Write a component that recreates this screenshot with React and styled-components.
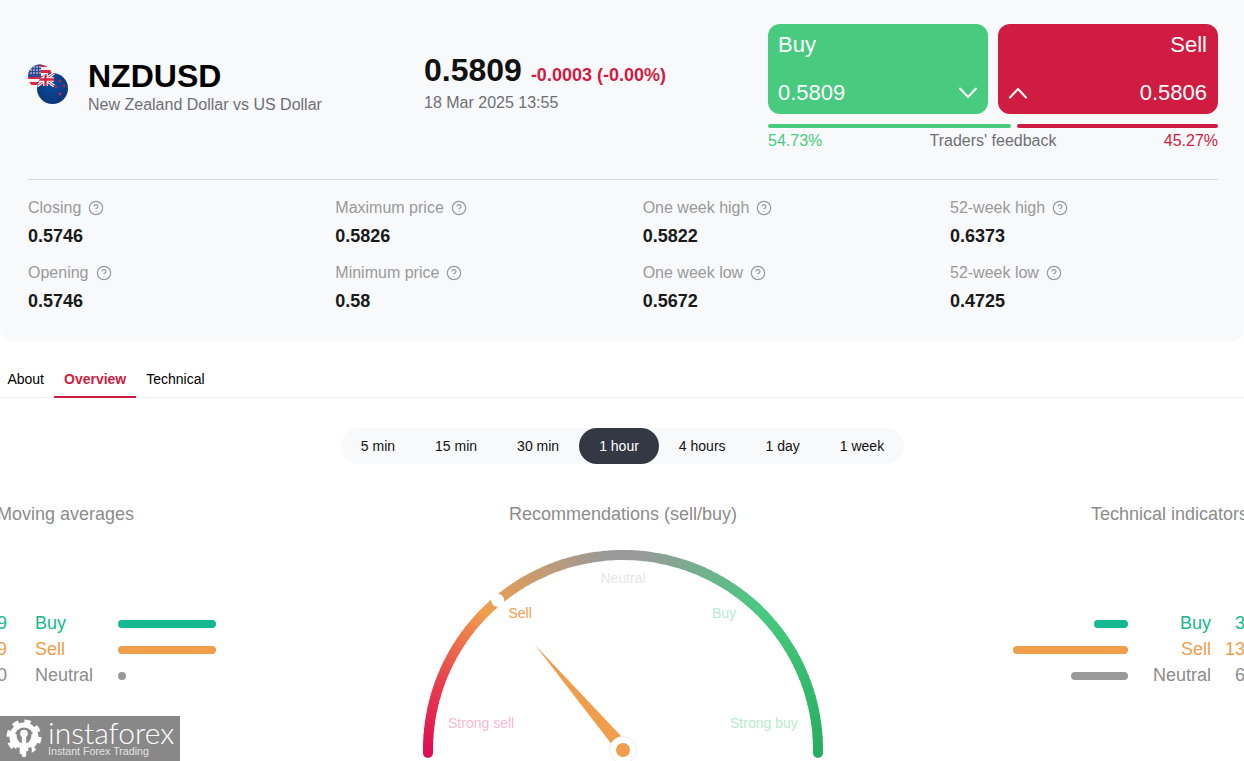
import React from "react";
import styled, { createGlobalStyle } from "styled-components";
import { CircleHelp } from "lucide-react";

const GlobalStyle = createGlobalStyle`
  html, body {
    margin: 0;
    padding: 0;
    background: #fff;
    font-family: "Liberation Sans", Arial, sans-serif;
  }
`;

const Page = styled.div`
  position: relative;
  width: 100%;
  height: 100vh;
  overflow: hidden;
`;

const Panel = styled.section`
  box-sizing: border-box;
  height: 341px;
  padding: 24px 26px 0 28px;
  background: #f8f9fb;
  border-radius: 0 0 12px 12px;
`;

const TopRow = styled.div`
  display: flex;
  height: 155px;
  border-bottom: 1px solid #d9d9d9;
`;

const Instrument = styled.div`
  width: 396px;
  display: flex;
  gap: 20px;
  padding-top: 40px;
`;

const Names = styled.div`
  margin-top: -5px;
`;

const Symbol = styled.div`
  font-size: 32px;
  line-height: 34px;
  font-weight: 700;
  color: #000;
`;

const Subtitle = styled.div`
  margin-top: 2px;
  font-size: 16px;
  line-height: 20px;
  color: #6f6f73;
`;

const Quote = styled.div`
  width: 344px;
  padding-top: 27px;
`;

const QuoteLine = styled.div`
  display: flex;
  align-items: baseline;
  gap: 9px;
  height: 38px;
`;

const Price = styled.span`
  font-size: 32px;
  line-height: 38px;
  font-weight: 700;
  color: #111;
`;

const Change = styled.span`
  font-size: 18px;
  font-weight: 700;
  color: #cf1c40;
`;

const QuoteDate = styled.div`
  margin-top: 4px;
  font-size: 16px;
  line-height: 20px;
  color: #6f6f73;
`;

const Trade = styled.div`
  width: 450px;
`;

const TradeButtons = styled.div`
  display: flex;
  gap: 10px;
`;

const TradeButton = styled.div`
  box-sizing: border-box;
  width: 220px;
  height: 90px;
  padding: 8px ${({ $sell }) => ($sell ? "11px" : "10px")} 8px 10px;
  display: flex;
  flex-direction: column;
  justify-content: space-between;
  border-radius: 12px;
  color: #fff;
  font-size: 22px;
  line-height: 26px;
  background: ${({ $sell }) => ($sell ? "#cf1c40" : "#48ca7f")};
  text-align: ${({ $sell }) => ($sell ? "right" : "left")};
`;

const TradeBottom = styled.div`
  display: flex;
  align-items: center;
  justify-content: space-between;
`;

const Feedback = styled.div`
  display: flex;
  gap: 6px;
  margin-top: 10px;
`;

const FeedbackBar = styled.div`
  height: 4px;
  border-radius: 2px;
  background: ${({ $color }) => $color};
`;

const FeedbackLabels = styled.div`
  display: flex;
  justify-content: space-between;
  margin-top: 3px;
  font-size: 16px;
  line-height: 20px;
  color: #6f6f73;
`;

const Percent = styled.span`
  color: ${({ $color }) => $color};
`;

const Stats = styled.div`
  display: grid;
  grid-template-columns: repeat(4, 307.33px);
  row-gap: 16px;
  padding-top: 18px;
`;

const StatLabel = styled.div`
  display: flex;
  align-items: center;
  gap: 7px;
  height: 20px;
  font-size: 16px;
  color: #999;
`;

const StatValue = styled.div`
  margin-top: 8px;
  font-size: 18px;
  line-height: 21px;
  font-weight: 700;
  color: #1a1a1a;
`;

const Tabs = styled.nav`
  display: flex;
  height: 56px;
  border-bottom: 1px solid #eceef2;
  align-items: flex-end;
`;

const Tab = styled.div`
  box-sizing: border-box;
  height: 35px;
  padding: 0 10px;
  margin-left: ${({ $first }) => ($first ? "-2.6px" : "0")};
  margin-bottom: -1px;
  font-size: 14px;
  line-height: 33px;
  font-weight: ${({ $active }) => ($active ? 700 : 400)};
  color: ${({ $active }) => ($active ? "#cf1c40" : "#000")};
  border-bottom: 2px solid ${({ $active }) => ($active ? "#cf1c40" : "transparent")};
`;

const PeriodWrap = styled.div`
  display: flex;
  justify-content: center;
  padding: 30px 0 0 1px;
`;

const Periods = styled.div`
  display: flex;
  height: 36px;
  border-radius: 18px;
  background: #f8f9fb;
`;

const Period = styled.div`
  padding: 0 20px;
  border-radius: 18px;
  font-size: 14px;
  line-height: 36px;
  color: ${({ $active }) => ($active ? "#fff" : "#111")};
  background: ${({ $active }) => ($active ? "#343844" : "transparent")};
`;

const Board = styled.div`
  display: flex;
  justify-content: space-between;
  margin: 40px -1px 0 -13px;
`;

const Side = styled.div`
  width: 229px;
  text-align: ${({ $right }) => ($right ? "right" : "left")};
`;

const Heading = styled.div`
  font-size: 18px;
  line-height: 20px;
  color: #8c8c8c;
  white-space: nowrap;
`;

const SideHeading = styled(Heading)`
  padding-left: ${({ $right }) => ($right ? "0" : "10px")};
  margin-right: ${({ $right }) => ($right ? "-3px" : "0")};
`;

const Legend = styled.div`
  margin-top: 86px;
`;

const LegendRow = styled.div`
  display: flex;
  align-items: center;
  height: 26px;
  font-size: 18px;
  color: ${({ $color }) => $color};
  flex-direction: ${({ $right }) => ($right ? "row-reverse" : "row")};
`;

const LegendCount = styled.span`
  width: 20px;
  flex: none;
  text-align: right;
`;

const LegendName = styled.span`
  flex: none;
  width: 83px;
  margin: ${({ $right }) => ($right ? "0 14px 0 0" : "0 0 0 28px")};
  text-align: ${({ $right }) => ($right ? "right" : "left")};
`;

const LegendBar = styled.span`
  display: block;
  flex: none;
  height: 8px;
  margin-top: 2px;
  border-radius: 4px;
  background: ${({ $color }) => $color};
`;

const BarSlot = styled.div`
  flex: 1;
  display: flex;
  justify-content: ${({ $right }) => ($right ? "flex-end" : "flex-start")};
`;

const Center = styled.div`
  width: 420px;
  margin-left: 14px;
  text-align: center;
`;

const GaugeSvg = styled.svg`
  display: block;
  margin-top: 31px;
  overflow: visible;
`;

const GaugeLabel = styled.text`
  font-family: "Liberation Sans", Arial, sans-serif;
  font-size: 14px;
`;

const Watermark = styled.div`
  position: absolute;
  left: 0;
  bottom: 0;
  width: 180px;
  height: 45px;
  display: flex;
  background: #888;
  color: #fff;
`;

const WatermarkText = styled.div`
  margin-left: 5px;
  padding-top: 3px;
`;

const WatermarkName = styled.div`
  font-family: Lato, "Open Sans", sans-serif;
  font-weight: 300;
  font-size: 30px;
  line-height: 26px;
  white-space: nowrap;
`;

const WatermarkTag = styled.div`
  font-size: 10.7px;
  line-height: 12px;
  color: #e2e2e2;
  white-space: nowrap;
`;

const stats = [
  ["Closing", "0.5746", "Opening", "0.5746"],
  ["Maximum price", "0.5826", "Minimum price", "0.58"],
  ["One week high", "0.5822", "One week low", "0.5672"],
  ["52-week high", "0.6373", "52-week low", "0.4725"],
];

const periods = ["5 min", "15 min", "30 min", "1 hour", "4 hours", "1 day", "1 week"];

const TEAL = "#14b98d";
const ORANGE = "#ef9e4b";
const GREY = "#999";

const movingAverages = [
  { name: "Buy", count: 19, color: TEAL, bar: TEAL, width: 98 },
  { name: "Sell", count: 19, color: ORANGE, bar: ORANGE, width: 98 },
  { name: "Neutral", count: 0, color: "#8c8c8c", bar: GREY, width: 8 },
];

const indicators = [
  { name: "Buy", count: 3, color: TEAL, bar: TEAL, width: 34 },
  { name: "Sell", count: 13, color: ORANGE, bar: ORANGE, width: 115 },
  { name: "Neutral", count: 6, color: "#8c8c8c", bar: GREY, width: 57 },
];

const gaugeStops = [
  [0, [223, 15, 83]],
  [20, [232, 62, 78]],
  [45, [239, 158, 75]],
  [85, [153, 153, 153]],
  [95, [153, 153, 153]],
  [135, [72, 202, 127]],
  [180, [39, 174, 96]],
];

const colorAt = (deg) => {
  for (let i = 1; i < gaugeStops.length; i++) {
    const [a, ca] = gaugeStops[i - 1];
    const [b, cb] = gaugeStops[i];
    if (deg <= b) {
      const t = (deg - a) / (b - a);
      const c = ca.map((v, k) => Math.round(v + (cb[k] - v) * t));
      return `rgb(${c.join(",")})`;
    }
  }
  return "rgb(39,174,96)";
};

const CX = 210;
const CY = 195;
const R = 195;

const pointAt = (deg) => {
  const rad = (deg * Math.PI) / 180;
  return [CX - R * Math.cos(rad), CY - R * Math.sin(rad)];
};

const Gauge = () => {
  const segments = [];
  for (let d = 0; d < 180; d += 2) {
    const [x1, y1] = pointAt(d);
    const [x2, y2] = pointAt(Math.min(d + 2.4, 180));
    segments.push(
      <path
        key={d}
        d={`M${x1} ${y1}A${R} ${R} 0 0 1 ${x2} ${y2}`}
        fill="none"
        stroke={colorAt(d + 1)}
        strokeWidth="10"
      />
    );
  }
  return (
    <GaugeSvg width="420" height="215" viewBox="0 0 420 215">
      <circle cx={CX - R} cy={CY + 3} r="5" fill={colorAt(0)} />
      <rect x={CX - R - 5} y={CY} width="10" height="3" fill={colorAt(0)} />
      <circle cx={CX + R} cy={CY + 3} r="5" fill={colorAt(180)} />
      <rect x={CX + R - 5} y={CY} width="10" height="3" fill={colorAt(180)} />
      {segments}
      <circle cx={CX - 125.3} cy={CY - 149.7} r="6.5" fill="#fff" />
      <GaugeLabel x={CX} y={28} textAnchor="middle" fill="#e6e6e6">Neutral</GaugeLabel>
      <GaugeLabel x={CX - 114.5} y={63} fill={ORANGE}>Sell</GaugeLabel>
      <GaugeLabel x={CX + 89} y={63} fill="#b5ebdc">Buy</GaugeLabel>
      <GaugeLabel x={CX - 175} y={173} fill="#f9b9d0">Strong sell</GaugeLabel>
      <GaugeLabel x={CX + 107} y={173} fill="#b8ead0">Strong buy</GaugeLabel>
      <polygon points="122,90 198.5,189 208.5,181.5" fill={ORANGE} />
      <circle cx={CX} cy={CY} r="13.5" fill="#fff" stroke="#eee" strokeWidth="1" />
      <circle cx={CX} cy={CY} r="7" fill={ORANGE} />
    </GaugeSvg>
  );
};

const Flags = () => (
  <svg width="40" height="40" viewBox="0 0 40 40" style={{ flex: "none" }}>
    <defs>
      <clipPath id="usClip"><circle cx="12" cy="12.5" r="12" /></clipPath>
      <clipPath id="nzClip"><circle cx="24.5" cy="24.5" r="15.5" /></clipPath>
      <radialGradient id="nzBlue" cx="50%" cy="40%" r="65%">
        <stop offset="0%" stopColor="#0d4ba0" />
        <stop offset="100%" stopColor="#0a3474" />
      </radialGradient>
    </defs>
    <g clipPath="url(#usClip)">
      <rect width="26" height="26" fill="#f4f4f4" />
      <rect y="0" width="26" height="3" fill="#d8283f" />
      <rect y="6" width="26" height="3" fill="#d8283f" />
      <rect y="12" width="26" height="3" fill="#d8283f" />
      <rect y="18" width="26" height="3" fill="#d8283f" />
      <rect width="13" height="13" fill="#2f4b95" />
      {[3, 6, 9].map((y) => [3, 6, 9, 12].map((x) => (
        <circle key={`${x}-${y}`} cx={x} cy={y} r="0.8" fill="#fff" />
      )))}
    </g>
    <g clipPath="url(#nzClip)">
      <rect x="9" y="9" width="31" height="31" fill="url(#nzBlue)" />
      <rect x="9" y="9" width="17" height="13" fill="#1c3f86" />
      <path d="M9 9L26 22M26 9L9 22" stroke="#fff" strokeWidth="3" />
      <path d="M9 9L26 22M26 9L9 22" stroke="#d4243d" strokeWidth="1" />
      <path d="M17.5 9V22M9 15.5H26" stroke="#fff" strokeWidth="4.5" />
      <path d="M17.5 9V22M9 15.5H26" stroke="#d4243d" strokeWidth="2.4" />
      <circle cx="32" cy="17" r="1.3" fill="#c9243f" />
      <circle cx="36" cy="22" r="1.2" fill="#c9243f" />
      <circle cx="28" cy="23" r="1.2" fill="#c9243f" />
      <circle cx="32" cy="30" r="1.4" fill="#c9243f" />
    </g>
  </svg>
);

const Chevron = ({ up }) => (
  <svg width="20" height="12" viewBox="0 0 20 12" fill="none">
    <path
      d={up ? "M2 10.5L10 2L18 10.5" : "M2 1.5L10 10L18 1.5"}
      stroke="#fff"
      strokeWidth="2"
      strokeLinecap="round"
      strokeLinejoin="round"
    />
  </svg>
);

const GearLogo = () => (
  <svg width="43" height="45" viewBox="0 0 43 45" style={{ flex: "none" }}>
    <circle cx="24" cy="21" r="15" fill="none" stroke="#fff" strokeWidth="5" strokeDasharray="6 5.78" />
    <circle cx="24" cy="21" r="12" fill="none" stroke="#fff" strokeWidth="5" />
    <circle cx="24" cy="17.5" r="3.8" fill="#fff" />
    <path d="M24 21V39" stroke="#fff" strokeWidth="4.4" strokeLinecap="round" />
    <path d="M15 18C15 25 18 28 22 29M33 18C33 25 30 28 26 29" fill="none" stroke="#fff" strokeWidth="3" />
    <path d="M18 31.5V38M30 31.5V38" stroke="#888" strokeWidth="3.4" />
  </svg>
);

const Legends = ({ items, right }) => (
  <Legend>
    {items.map((item) => (
      <LegendRow key={item.name} $color={item.color} $right={right}>
        <LegendCount>{item.count}</LegendCount>
        <LegendName $right={right}>{item.name}</LegendName>
        <BarSlot $right={right}>
          <LegendBar $color={item.bar} style={{ width: item.width }} />
        </BarSlot>
      </LegendRow>
    ))}
  </Legend>
);

export default function App() {
  return (
    <Page>
      <GlobalStyle />
      <Panel>
        <TopRow>
          <Instrument>
            <Flags />
            <Names>
              <Symbol>NZDUSD</Symbol>
              <Subtitle>New Zealand Dollar vs US Dollar</Subtitle>
            </Names>
          </Instrument>
          <Quote>
            <QuoteLine>
              <Price>0.5809</Price>
              <Change>-0.0003 (-0.00%)</Change>
            </QuoteLine>
            <QuoteDate>18 Mar 2025 13:55</QuoteDate>
          </Quote>
          <Trade>
            <TradeButtons>
              <TradeButton>
                <div>Buy</div>
                <TradeBottom>
                  <span>0.5809</span>
                  <Chevron />
                </TradeBottom>
              </TradeButton>
              <TradeButton $sell>
                <div>Sell</div>
                <TradeBottom>
                  <Chevron up />
                  <span>0.5806</span>
                </TradeBottom>
              </TradeButton>
            </TradeButtons>
            <Feedback>
              <FeedbackBar $color="#48ca7f" style={{ width: 243 }} />
              <FeedbackBar $color="#cf1c40" style={{ width: 201 }} />
            </Feedback>
            <FeedbackLabels>
              <Percent $color="#48ca7f">54.73%</Percent>
              <span>Traders' feedback</span>
              <Percent $color="#cf1c40">45.27%</Percent>
            </FeedbackLabels>
          </Trade>
        </TopRow>
        <Stats>
          {stats[0].map((_, i) =>
            i % 2 === 0
              ? stats.map((col) => (
                  <div key={col[i]}>
                    <StatLabel>
                      {col[i]}
                      <CircleHelp size={16} strokeWidth={1.8} color="#999" />
                    </StatLabel>
                    <StatValue>{col[i + 1]}</StatValue>
                  </div>
                ))
              : null
          )}
        </Stats>
      </Panel>
      <Tabs>
        <Tab $first>About</Tab>
        <Tab $active>Overview</Tab>
        <Tab>Technical</Tab>
      </Tabs>
      <PeriodWrap>
        <Periods>
          {periods.map((p) => (
            <Period key={p} $active={p === "1 hour"}>{p}</Period>
          ))}
        </Periods>
      </PeriodWrap>
      <Board>
        <Side>
          <SideHeading>Moving averages</SideHeading>
          <Legends items={movingAverages} />
        </Side>
        <Center>
          <Heading>Recommendations (sell/buy)</Heading>
          <Gauge />
        </Center>
        <Side $right>
          <SideHeading $right>Technical indicators</SideHeading>
          <Legends items={indicators} right />
        </Side>
      </Board>
      <Watermark>
        <GearLogo />
        <WatermarkText>
          <WatermarkName>instaforex</WatermarkName>
          <WatermarkTag>Instant Forex Trading</WatermarkTag>
        </WatermarkText>
      </Watermark>
    </Page>
  );
}
